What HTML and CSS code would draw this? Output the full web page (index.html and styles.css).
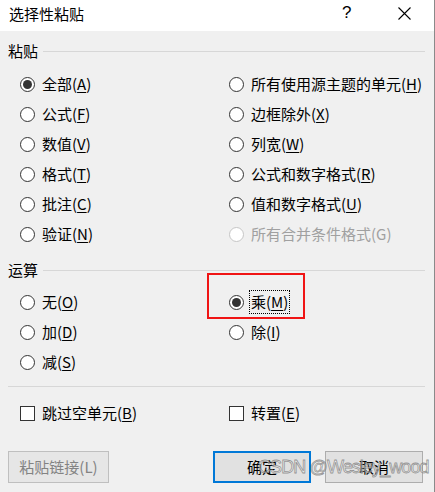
FILE: index.html
```html
<!DOCTYPE html>
<html lang="zh-CN">
<head>
<meta charset="utf-8">
<title>选择性粘贴</title>
<link rel="stylesheet" href="styles.css">
</head>
<body>
<div class="dialog">
  <div class="titlebar">
    <span class="title">选择性粘贴</span>
    <span class="help">?</span>
    <span class="close">
      <svg width="13" height="13" viewBox="0 0 13 13"><path d="M0.5 0.5 L12.5 12.5 M12.5 0.5 L0.5 12.5" stroke="#000" stroke-width="1.1" fill="none"/></svg>
    </span>
  </div>
  <div class="body">
    <div class="group-head"><span class="group-label">粘贴</span><span class="group-line"></span></div>
    <div class="grid paste-grid">
      <label class="opt"><span class="radio checked"></span><span>全部(<u>A</u>)</span></label>
      <label class="opt"><span class="radio"></span><span>所有使用源主题的单元(<u>H</u>)</span></label>
      <label class="opt"><span class="radio"></span><span>公式(<u>F</u>)</span></label>
      <label class="opt"><span class="radio"></span><span>边框除外(<u>X</u>)</span></label>
      <label class="opt"><span class="radio"></span><span>数值(<u>V</u>)</span></label>
      <label class="opt"><span class="radio"></span><span>列宽(<u>W</u>)</span></label>
      <label class="opt"><span class="radio"></span><span>格式(<u>T</u>)</span></label>
      <label class="opt"><span class="radio"></span><span>公式和数字格式(<u>R</u>)</span></label>
      <label class="opt"><span class="radio"></span><span>批注(<u>C</u>)</span></label>
      <label class="opt"><span class="radio"></span><span>值和数字格式(<u>U</u>)</span></label>
      <label class="opt"><span class="radio"></span><span>验证(<u>N</u>)</span></label>
      <label class="opt disabled"><span class="radio"></span><span>所有合并条件格式(G)</span></label>
    </div>
    <div class="group-head op-head"><span class="group-label">运算</span><span class="group-line"></span></div>
    <div class="grid op-grid">
      <label class="opt"><span class="radio"></span><span>无(<u>O</u>)</span></label>
      <label class="opt marked"><span class="radio checked"></span><span class="focus">乘(<u>M</u>)</span><span class="redbox"></span></label>
      <label class="opt"><span class="radio"></span><span>加(<u>D</u>)</span></label>
      <label class="opt"><span class="radio"></span><span>除(<u>I</u>)</span></label>
      <label class="opt"><span class="radio"></span><span>减(<u>S</u>)</span></label>
    </div>
    <div class="sep"></div>
    <div class="grid check-grid">
      <label class="opt"><span class="check"></span><span>跳过空单元(<u>B</u>)</span></label>
      <label class="opt"><span class="check"></span><span>转置(<u>E</u>)</span></label>
    </div>
    <div class="buttons">
      <button class="btn disabled-btn">粘贴链接(L)</button>
      <div class="spacer"></div>
      <button class="btn default-btn">确定</button>
      <button class="btn">取消</button>
      <span class="watermark">CSDN @Wesley_wood</span>
    </div>
  </div>
</div>
</body>
</html>
```
FILE: styles.css
```css
* { box-sizing: border-box; }
html, body { margin: 0; padding: 0; }
body {
  width: 435px;
  height: 492px;
  overflow: hidden;
  background: #f0f0f0;
  font-family: "Noto Sans CJK SC", "Noto Sans", sans-serif;
  font-size: 15px;
  color: #000;
}
.dialog {
  width: 435px;
  height: 492px;
  border-right: 1px solid #8a8a8a;
  display: flex;
  flex-direction: column;
}
.titlebar {
  height: 31px;
  background: #fff;
  display: flex;
  align-items: center;
  position: relative;
  flex: none;
}
.title {
  padding-left: 9px;
  font-size: 15px;
  line-height: 20px;
  margin-top: -4px;
}
.help {
  position: absolute;
  left: 342px;
  top: 3px;
  font-family: "Liberation Sans", sans-serif;
  font-size: 17px;
  line-height: 20px;
}
.close {
  position: absolute;
  left: 398px;
  top: 7px;
  width: 13px;
  height: 13px;
  display: block;
}
.close svg { display: block; }
.body {
  padding: 10px 9px 0 8px;
  flex: 1;
}
.group-head {
  display: flex;
  align-items: center;
  height: 20px;
}
.group-label {
  line-height: 20px;
  padding-right: 5px;
}
.group-line {
  flex: 1;
  height: 1px;
  background: #d7d7d7;
  margin-top: 1px;
}
.grid {
  display: grid;
  grid-template-columns: 209px 1fr;
  padding-left: 12px;
}
.paste-grid { margin-top: 8px; grid-auto-rows: 30px; }
.op-head { margin-top: 11px; }
.op-grid { margin-top: 7px; grid-auto-rows: 30px; }
.opt {
  display: flex;
  align-items: center;
  gap: 7px;
  line-height: 20px;
  position: relative;
  white-space: nowrap;
}
.opt u { text-decoration-thickness: 1px; text-underline-offset: 2px; }
.radio {
  width: 15px;
  height: 15px;
  border: 1px solid #333;
  border-radius: 50%;
  background: #fff;
  flex: none;
  display: flex;
  align-items: center;
  justify-content: center;
}
.radio.checked::after {
  content: "";
  width: 9px;
  height: 9px;
  border-radius: 50%;
  background: #333;
}
.disabled { color: #a0a0a0; }
.disabled .radio { border-color: #c6c6c6; }
.focus {
  outline: 1px dotted #000;
  outline-offset: 0;
  padding: 0 1px;
  margin-left: -1px;
  line-height: 22px;
}
.redbox {
  position: absolute;
  left: -22px;
  top: -14px;
  width: 98px;
  height: 46px;
  border: 2px solid #f01414;
  pointer-events: none;
}
.sep {
  height: 1px;
  background: #d7d7d7;
  margin-top: 9px;
}
.check-grid { margin-top: 11px; grid-auto-rows: 30px; }
.check {
  width: 15px;
  height: 15px;
  border: 1px solid #333;
  background: #fff;
  flex: none;
}
.buttons {
  display: flex;
  align-items: center;
  margin-top: 23px;
  padding-right: 2px;
  position: relative;
}
.spacer { flex: 1; }
.btn {
  font-family: inherit;
  font-size: 15px;
  height: 32px;
  width: 98px;
  background: #e1e1e1;
  border: 1px solid #adadad;
  color: #000;
  padding: 0;
  line-height: 20px;
}
.disabled-btn {
  width: 101px;
  color: #838383;
  border-color: #bfbfbf;
  background: #e6e6e6;
}
.default-btn {
  border: 2px solid #0078d7;
  margin-right: 14px;
}
.watermark {
  position: absolute;
  left: 250px;
  top: 6px;
  font-family: "Liberation Sans", sans-serif;
  font-size: 18px;
  letter-spacing: -0.9px;
  color: rgba(250, 250, 250, 0.5);
  -webkit-text-stroke: 0.8px rgba(90, 90, 90, 0.6);
  pointer-events: none;
  white-space: nowrap;
}
```
